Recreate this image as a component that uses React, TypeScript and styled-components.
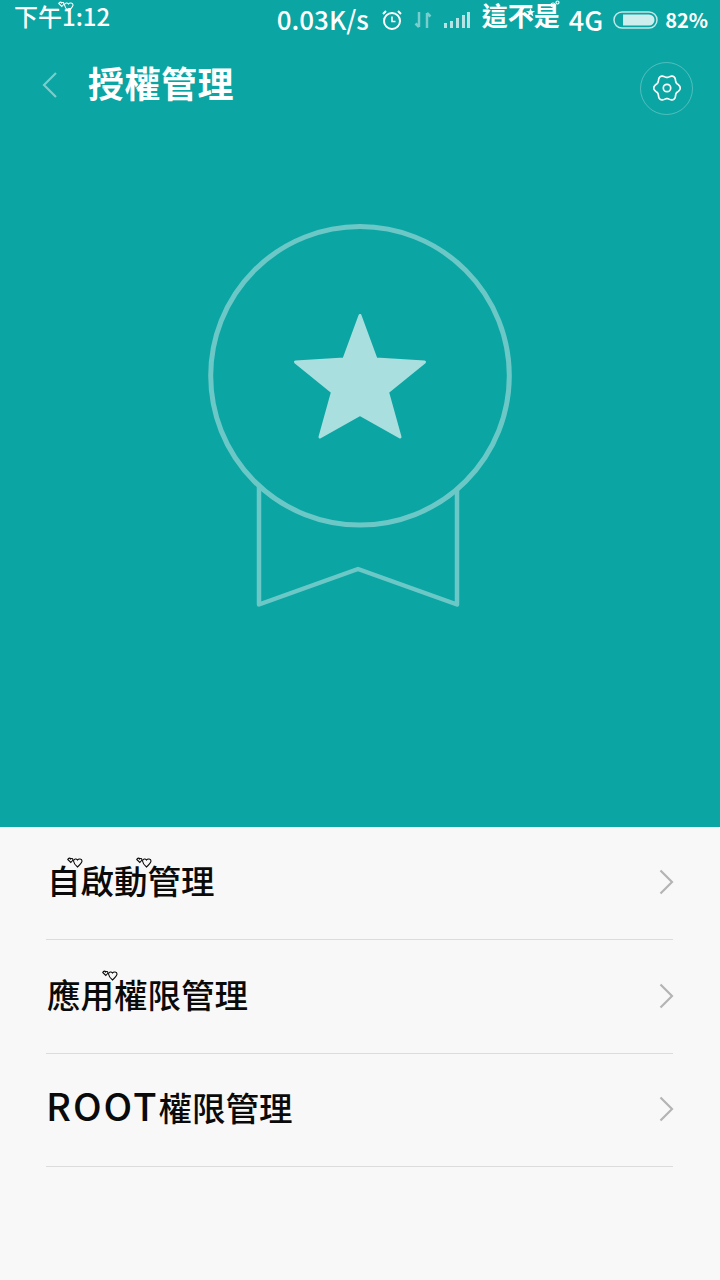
import React from 'react';
import styled, { createGlobalStyle } from 'styled-components';

const GlobalStyle = createGlobalStyle`
  html, body {
    margin: 0;
    padding: 0;
    background: #f8f8f8;
  }
  * {
    box-sizing: border-box;
  }
`;

const FONT = `"Noto Sans CJK TC", "Noto Sans", sans-serif`;

const Page = styled.div`
  width: 720px;
  height: 1280px;
  display: flex;
  flex-direction: column;
  overflow: hidden;
  background: #f8f8f8;
  font-family: ${FONT};
`;

const Hero = styled.section`
  height: 826.5px;
  flex: none;
  display: flex;
  flex-direction: column;
  background: #0ba5a3;
  color: #fff;
`;

const StatusBar = styled.div`
  height: 40px;
  padding: 0 12px 0 14px;
  display: flex;
  align-items: center;
  justify-content: space-between;
`;

const StatusGroup = styled.div`
  display: flex;
  align-items: center;
`;

const StatusText = styled.span<{ $size?: number; $left?: number; $raise?: number; $weight?: number }>`
  position: relative;
  display: inline-block;
  margin-left: ${p => p.$left ?? 0}px;
  margin-bottom: ${p => p.$raise ?? 0}px;
  font-size: ${p => p.$size ?? 24}px;
  font-weight: ${p => p.$weight ?? 500};
  line-height: 30px;
  white-space: nowrap;
`;

const StatusIcon = styled.svg<{ $left: number }>`
  display: block;
  margin-left: ${p => p.$left}px;
  flex: none;
`;

const Header = styled.header`
  height: 96px;
  padding: 0 27px 8px 42px;
  display: flex;
  align-items: center;
`;

const BackIcon = styled.svg`
  display: block;
  flex: none;
  margin-top: 2px;
`;

const Title = styled.h1`
  margin: 0 0 4px 30px;
  flex: 1;
  font-size: 36px;
  font-weight: 700;
  line-height: 48px;
  letter-spacing: 0.5px;
`;

const SettingsButton = styled.button`
  width: 53px;
  height: 53px;
  margin-top: 8px;
  padding: 0;
  display: flex;
  align-items: center;
  justify-content: center;
  border: 1px solid rgba(255, 255, 255, 0.28);
  border-radius: 50%;
  background: transparent;
`;

const Medal = styled.svg`
  display: block;
  flex: none;
  margin: 88px 0 0 208px;
`;

const List = styled.ul`
  margin: 0;
  padding: 0 47px 0 46px;
  list-style: none;
`;

const Row = styled.li`
  height: 113.5px;
  padding: 0 0 1px 1px;
  display: flex;
  align-items: center;
  justify-content: space-between;
  border-bottom: 1px solid #dcdcdc;
`;

const Label = styled.span`
  position: relative;
  margin-bottom: 4px;
  font-size: 33.5px;
  font-weight: 500;
  line-height: 44px;
  color: #0a0a0a;
  white-space: nowrap;
`;

const Latin = styled.span`
  margin-left: -1px;
  font-size: 38px;
  line-height: 38px;
  letter-spacing: 2px;
`;

const Decoration = styled.svg<{ $left: number; $top: number }>`
  position: absolute;
  left: ${p => p.$left}px;
  top: ${p => p.$top}px;
`;

const Chevron = styled.svg`
  display: block;
  flex: none;
  margin-right: -1px;
`;

const Hearts = ({ left, top, color }: { left: number; top: number; color: string }) => (
  <Decoration $left={left} $top={top} width="16" height="11" viewBox="0 0 16 11" fill="none">
    <path d="M.8 2.500C1.500.5 3.300 1 3.600 2 4.500 1 6.300 1.500 5.800 3.300L3.800 5.500z" stroke={color} strokeWidth="1.100" />
    <path d="M6.500 4C6.800 1.500 9.500 1.500 10.500 3 11.500 1.500 15 1.500 15 4c0 2-2.500 4-4.500 6C8.500 8.500 6.800 6 6.500 4z" stroke={color} strokeWidth="1.100" />
  </Decoration>
);

// six soft lobes, same outline as the settings glyph
const gearPath = (() => {
  const points: string[] = [];
  for (let i = 0; i < 120; i++) {
    const a = (i / 120) * Math.PI * 2;
    const r = 11.9 + 1.3 * Math.cos(6 * a);
    points.push(`${(14 + r * Math.cos(a)).toFixed(2)} ${(14 + r * Math.sin(a)).toFixed(2)}`);
  }
  return `M${points.join('L')}Z`;
})();

const rows = [
  { key: 'auto', text: '自啟動管理', hearts: [{ left: 20, top: -1 }, { left: 89, top: -1 }] },
  { key: 'perm', text: '應用權限管理', hearts: [{ left: 55, top: -2 }] },
  { key: 'root', latin: 'ROOT', text: '權限管理', hearts: [] },
];

const App: React.FC = () => {
  return (
    <Page>
      <GlobalStyle />
      <Hero>
        <StatusBar>
          <StatusGroup>
            <StatusText $raise={9}>
              下午1:12
              <Hearts left={44} top={0} color="#fff" />
            </StatusText>
          </StatusGroup>
          <StatusGroup>
            <StatusText $size={26} $raise={2}>0.03K/s</StatusText>
            <StatusIcon $left={12} width="22" height="22" viewBox="0 0 22 22" fill="none" stroke="#fff" strokeWidth="2">
              <circle cx="11" cy="12" r="8" />
              <path d="M11 7.500V12.500H14.500" strokeWidth="1.500" />
              <path d="M2 5l3-3M20 5l-3-3" />
            </StatusIcon>
            <StatusIcon $left={11} width="18" height="18" viewBox="0 0 18 18" fill="none" stroke="#fff" strokeWidth="2.500" opacity="0.45">
              <path d="M5 1v15M1.500 12.500L5 16M13 17V2M13 2l3.500 3.500" />
            </StatusIcon>
            <StatusIcon $left={12} width="26" height="18" viewBox="0 0 26 18" fill="#fff">
              <rect x="0" y="12" width="3" height="5" opacity="0.7" />
              <rect x="6" y="10" width="3" height="7" opacity="0.7" />
              <rect x="12" y="7" width="3" height="10" opacity="0.7" />
              <rect x="18" y="4" width="3" height="13" opacity="0.7" />
              <rect x="23" y="1" width="3" height="16" opacity="0.7" />
            </StatusIcon>
            <StatusText $size={26} $left={12} $raise={10} $weight={700}>
              這不是
              <Decoration $left={44} $top={8} width="9" height="9" viewBox="0 0 9 9" fill="#fff">
                <path d="M4.500 0l1.200 3H9L6.400 5l1 3.500-2.900-2-2.900 2 1-3.500L0 3h3.300z" />
              </Decoration>
              <Decoration $left={68} $top={0} width="10" height="9" viewBox="0 0 10 9" fill="none" stroke="#fff" strokeWidth="1.200">
                <circle cx="3" cy="5" r="2" />
                <circle cx="7.500" cy="2.500" r="1.500" />
              </Decoration>
            </StatusText>
            <StatusText $size={27} $left={9} $raise={1}>4G</StatusText>
            <StatusIcon $left={10} width="45" height="18" viewBox="0 0 45 18" fill="none">
              <rect x="1" y="1" width="43" height="16" rx="8" stroke="#fff" strokeOpacity="0.75" strokeWidth="1.500" />
              <path d="M10 3.500H36a5.500 5.500 0 0 1 0 11H10z" fill="#cdeeed" />
            </StatusIcon>
            <StatusText $size={20} $left={7} $raise={1} $weight={700}>82%</StatusText>
          </StatusGroup>
        </StatusBar>
        <Header>
          <BackIcon width="16" height="28" viewBox="0 0 16 28" fill="none" stroke="#fff" strokeOpacity="0.45" strokeWidth="2.200">
            <path d="M14 2L2 14l12 12" />
          </BackIcon>
          <Title>授權管理</Title>
          <SettingsButton aria-label="settings">
            <svg width="28" height="28" viewBox="0 0 28 28" fill="none" stroke="#fff" strokeWidth="1.700">
              <path d={gearPath} strokeLinejoin="round" />
              <circle cx="14" cy="14" r="3.700" />
            </svg>
          </SettingsButton>
        </Header>
        <Medal width="304" height="384" viewBox="208 224 304 384" fill="none">
          <circle cx="360" cy="375.800" r="149.300" stroke="#6cc8c7" strokeWidth="5" />
          <path
            d="M259 486V604.500L358 569L457 604.500V490"
            stroke="#6cc8c7"
            strokeWidth="4.500"
            strokeLinejoin="round"
          />
          <path
            d="M360 315.500L376 359L424.500 362L387.500 392L400 437L360 414.500L320 437L332.500 392L295.500 362L344 359Z"
            fill="#aadfdf"
            stroke="#aadfdf"
            strokeWidth="3"
            strokeLinejoin="round"
          />
        </Medal>
      </Hero>
      <List>
        {rows.map(row => (
          <Row key={row.key}>
            <Label>
              {row.latin && <Latin>{row.latin}</Latin>}
              {row.text}
              {row.hearts.map(h => (
                <Hearts key={h.left} left={h.left} top={h.top} color="#0a0a0a" />
              ))}
            </Label>
            <Chevron width="15" height="26" viewBox="0 0 15 26" fill="none" stroke="#b4b4b4" strokeWidth="2.200">
              <path d="M1.500 1.500L13 13 1.500 24.500" />
            </Chevron>
          </Row>
        ))}
      </List>
    </Page>
  );
};

export default App;
